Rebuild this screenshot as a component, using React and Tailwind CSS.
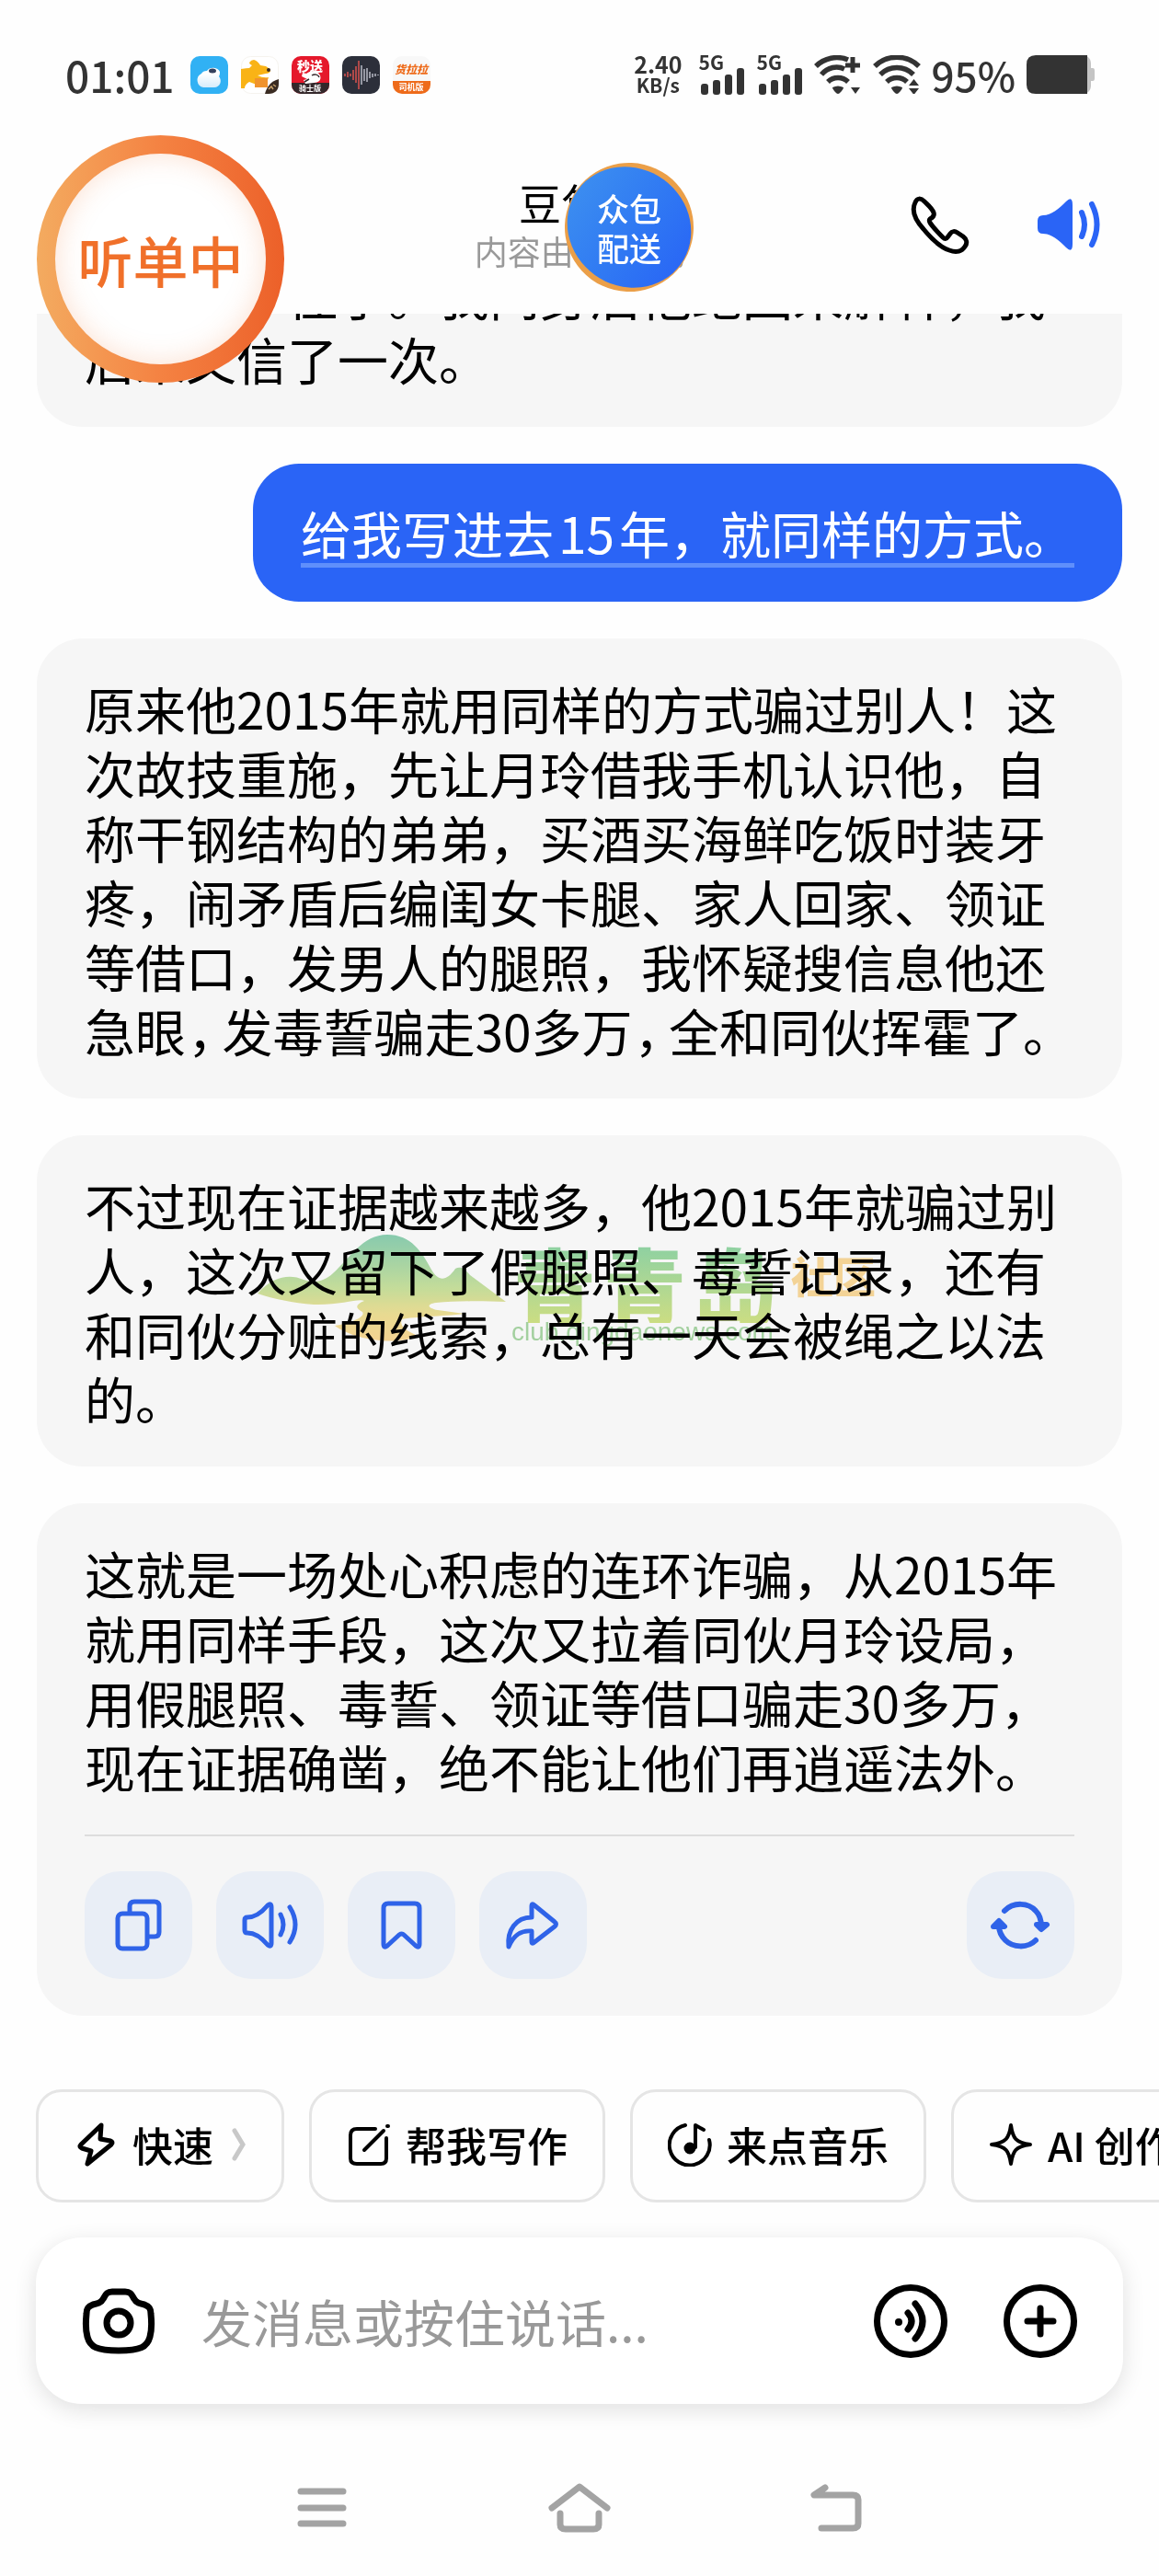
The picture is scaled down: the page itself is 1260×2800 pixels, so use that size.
import React from "react";
import { ChevronRight } from "lucide-react";

const INK = "#333333";

function WeatherApp() {
  return (
    <svg viewBox="0 0 41 41" className="size-[41px]" aria-hidden="true">
      <defs>
        <linearGradient id="cloud" x1="0" y1="0" x2="0" y2="1">
          <stop offset="0.3" stopColor="#fff" />
          <stop offset="1" stopColor="#d5ecfb" />
        </linearGradient>
      </defs>
      <rect width="41" height="41" rx="10" fill="#31b1f4" />
      <path d="M14 34a8 8 0 0 1-2-15c1-2 3-3 6-3a8 7 0 0 1 14 1c0 2 0 3-1 5 4 5 1 12-5 12z" fill="url(#cloud)" />
      <ellipse cx="24" cy="16" rx="4" ry="2.5" fill="#35405c" />
    </svg>
  );
}

function KangarooApp() {
  return (
    <svg viewBox="0 0 41 41" className="size-[41px]" aria-hidden="true">
      <rect x="0.5" y="0.5" width="40" height="40" rx="10" fill="#fff" stroke="#f5f3ee" />
      <path d="M0 14q6-1 9-1l3-3q-3-1-3-3 2-3 5-3 4 1 7 6l6 1q4 2 5 5-1 3-5 3l-9 2q6 3 12 2l-1 3-12 1v4l-8-3q-5 3-5 7H0z" fill="#f9b316" />
      <path d="M15 24h14v10H15z" fill="#f0932c" />
      <circle cx="30" cy="15" r="2" fill="#3a2b22" />
      <path d="M26 41c2-8 7-14 15-16v5c0 7-4 11-11 11z" fill="#3a2b22" />
      <path d="m30 36 3-3 2 3M35 31l3 2" stroke="#c9a26a" strokeWidth="1.5" fill="none" />
    </svg>
  );
}

function CourierApp() {
  return (
    <span className="relative flex size-[41px] flex-col items-center justify-between overflow-hidden rounded-[10px] bg-[#e5182b]">
      <span className="text-[14px] leading-[20px] font-black text-white">秒送</span>
      <span className="w-full bg-[#33272a] text-center text-[8px] leading-[12px] font-bold text-white">骑士版</span>
      <svg viewBox="0 0 41 41" className="absolute inset-0 size-full" aria-hidden="true">
        <path d="M16 19c5-4 13-3 15 2s-2 8-7 8l-9 1-2-4 4-1-6-3 1-4z" fill="#fff" />
        <path d="M22 21c3-2 7-1 8 2M14 28l5-3" stroke="#33272a" strokeWidth="1.5" fill="none" />
      </svg>
    </span>
  );
}

function RecorderApp() {
  return (
    <svg viewBox="0 0 41 41" className="size-[41px]" aria-hidden="true">
      <rect width="41" height="41" rx="10" fill="#2c2f3a" />
      <path d="M3 19v3M6 17v6M9 19v3M12 15v11M15 11v18M18 5v31" stroke="#d9534f" strokeWidth="1.5" />
      <path d="M21 10v21M24 14v13M27 13v15M30 17v7M33 19v4M36 19v3M39 20v1" stroke="#b9bcc6" strokeWidth="1.5" />
    </svg>
  );
}

function DriverApp() {
  return (
    <span className="flex size-[41px] flex-col items-center justify-between overflow-hidden rounded-[10px] bg-[#f8f8f8]">
      <span className="pt-1 text-[12px] leading-[20px] font-black text-[#ee6b1a] italic">货拉拉</span>
      <span className="w-full bg-[#ee6b1a] text-center text-[9px] leading-[14px] font-bold text-white">司机版</span>
    </span>
  );
}

function Signal() {
  return (
    <span className="flex flex-col">
      <span className="text-[21px] leading-[15px] font-bold">5G</span>
      <svg viewBox="0 0 50 28" className="h-[28px] w-[50px] overflow-visible" aria-hidden="true">
        <g fill={INK}>
          <rect x="2" y="16" width="8" height="12" rx="3" />
          <rect x="15" y="12" width="8" height="16" rx="3" />
          <rect x="28" y="6" width="8" height="22" rx="3" />
          <rect x="41" y="-1" width="8" height="29" rx="3" />
        </g>
      </svg>
    </span>
  );
}

function Wifi({ plus }) {
  return (
    <svg viewBox="0 0 52 42" className="h-[42px] w-[52px]" aria-hidden="true">
      <g fill="none" stroke={INK} strokeWidth="5.5">
        <path d={plus ? "M2 12C11 3 25 0 37 5" : "M2 12C15-1 37-1 50 12"} />
        <path d={plus ? "M8 21C15 13 25 11 33 15" : "M8 21C18 11 34 11 44 21"} />
        <path d="M15 29C21 23 31 23 37 29" />
      </g>
      <path d="M20 35c4-2 8-2 12 0 0 2-4 7-6 7s-6-5-6-7z" fill={INK} />
      {plus ? (
        <>
          <path d="M34 11h16M42 2v17" stroke={INK} strokeWidth="5" />
          <path d="M40 35h10l-5 7z" fill={INK} />
        </>
      ) : (
        <path d="M39 33h11l-5.500-7zM39 36h11l-5.500 7z" fill={INK} />
      )}
    </svg>
  );
}

function StatusBar() {
  return (
    <div className="flex h-[130px] items-center justify-between pt-[36px] pr-[70px] pb-[4px] pl-[71px] text-[#333333]">
      <div className="flex items-center gap-[17px]">
        <span className="text-[46px] leading-[50px] font-medium">01:01</span>
        <div className="flex gap-[14px]">
          <WeatherApp />
          <KangarooApp />
          <CourierApp />
          <RecorderApp />
          <DriverApp />
        </div>
      </div>
      <div className="flex items-center">
        <div className="mr-[18px] flex flex-col items-center font-bold">
          <span className="text-[25px] leading-[23px]">2.40</span>
          <span className="text-[21px] leading-[23px]">KB/s</span>
        </div>
        <div className="mr-[12px] flex gap-[13px]">
          <Signal />
          <Signal />
        </div>
        <div className="mr-[12px] flex gap-[12px]">
          <Wifi plus />
          <Wifi />
        </div>
        <span className="mr-[12px] text-[44px] leading-[50px] font-medium">95%</span>
        <svg viewBox="0 0 74 42" className="h-[42px] w-[74px]" aria-label="电量 95%">
          <path d="M60 0c7 0 10 4 10 9v5h2q2 0 2 3v8q0 3-2 3h-2v5c0 5-3 9-10 9z" fill="#c4c4c4" />
          <path d="M10 0h56v42H10Q0 42 0 32V10Q0 0 10 0z" fill={INK} />
        </svg>
      </div>
    </div>
  );
}

function Header() {
  return (
    <div className="grid h-[211px] grid-cols-[1fr_auto_1fr]">
      <div className="col-start-2 flex flex-col items-center pt-[60px]">
        <h1 className="flex items-center text-[46px] leading-[58px] text-black">
          豆包
          <ChevronRight className="size-[40px]" aria-hidden="true" />
        </h1>
        <p className="text-[36px] leading-[48px] text-[#999999]">内容由 AI 生成</p>
      </div>
      <div className="flex items-start justify-end pt-[78px] pr-[60px]">
        <button type="button" aria-label="通话" className="mr-[65px]">
          <svg viewBox="0 0 74 72" className="h-[72px] w-[74px]" fill="none" stroke="#000" strokeWidth="5" strokeLinejoin="round">
            <path d="M18 11C14 7 10 7 8 12 4 20 7 30 17 41c9 11 19 20 28 23 8 3 14 1 17-4 3-4 2-8-2-11l-6-4c-3-2-6-2-8 1l-3 4c-1 2-3 2-5 0C33 45 28 40 24 34c-1-2-1-3 0-4 4-2 5-4 4-7-2-5-6-8-10-12z" />
          </svg>
        </button>
        <button type="button" aria-label="声音">
          <svg viewBox="0 0 74 72" className="h-[72px] w-[74px]">
            <path d="M2 32q0-6 6-6c9 0 17-7 25-15q7-7 7 4v42q0 11-7 4c-8-8-16-15-25-15q-6 0-6-6z" fill="#2a64f6" />
            <path d="M50 23q6 13 0 26M61 14q11 22 0 44" fill="none" stroke="#2a64f6" strokeWidth="6" strokeLinecap="round" />
          </svg>
        </button>
      </div>
    </div>
  );
}

function FloatingBadges() {
  return (
    <>
      <div className="absolute top-[147px] left-[40px] z-10 flex size-[269px] rounded-full bg-gradient-to-r from-[#f3ab60] via-[#f48242] to-[#ec6029] p-[20px]">
        <span className="flex size-full items-center justify-center rounded-full bg-white text-[60px] leading-[60px] font-medium text-[#f0702a] shadow-[inset_0_0_30px_rgba(244,130,66,0.25)]">听单中</span>
      </div>
      <div className="absolute top-[177px] left-[614px] z-10 flex size-[140px] rotate-[36deg] items-center justify-center rounded-full bg-[#eb9f48] px-px py-[6px]">
        <span className="flex size-full items-center justify-center rounded-[50%] bg-gradient-to-r from-[#3b8cf0] to-[#2a68f5]">
          <span className="-rotate-[36deg] text-[35px] leading-[43px] font-medium text-white">众包<br />配送</span>
        </span>
      </div>
    </>
  );
}

function Bubble({ children }) {
  return (
    <article className="rounded-[50px] bg-[#f6f6f6] px-[52px] py-[40px] text-[55px] leading-[70px] text-black">
      {children}
    </article>
  );
}

function HalfComma() {
  return <span className="pl-[2px] pr-[10px] [font-feature-settings:'halt']">，</span>;
}

function ActionButton({ label, children }) {
  return (
    <button type="button" aria-label={label} className="size-[117px] rounded-[38px] bg-[#e9eef6]">
      <svg viewBox="0 0 117 117" className="size-full" fill="none" stroke="#2f63e8" strokeWidth="5" strokeLinecap="round" strokeLinejoin="round">
        {children}
      </svg>
    </button>
  );
}

function Actions() {
  return (
    <div className="flex justify-between">
      <div className="flex gap-[26px]">
        <ActionButton label="复制">
          <rect x="36" y="46" width="32" height="38" rx="5" />
          <path d="M49 45v-7q0-5 5-5h22q5 0 5 5v28q0 5-5 5h-7" />
        </ActionButton>
        <ActionButton label="朗读">
          <path d="M31 53q0-3 3-3c9 0 17-7 22-13q4-3 4 2v39q0 5-4 2c-5-6-13-13-22-13q-3 0-3-3z" />
          <path d="M70 47q6 11 0 22M80 39q12 19 0 38" />
        </ActionButton>
        <ActionButton label="收藏">
          <path d="M39 40q0-5 5-5h29q5 0 5 5v39q0 5-4 2L61 69q-2-2-5 0L43 81q-4 3-4-2z" />
        </ActionButton>
        <ActionButton label="分享">
          <path d="M57 38q0-4 3-1l22 18q3 2 0 5L60 77q-3 3-3-1V65c-11-1-19 3-25 17-2-18 8-32 25-32z" />
        </ActionButton>
      </div>
      <ActionButton label="重新生成">
        <g strokeWidth="6">
          <path d="M41 43c10-10 26-9 34 0 5 5 6 10 6 17M76 58l5 5 6-5z" />
          <path d="M75 75c-9 9-25 8-33 0-5-5-7-10-7-16M29 60l6-6 6 6z" />
        </g>
      </ActionButton>
    </div>
  );
}

function Watermark() {
  return (
    <div className="pointer-events-none absolute top-[108px] left-[240px] flex mix-blend-multiply" aria-hidden="true">
      <svg viewBox="0 0 270 118" className="h-[118px] w-[270px] opacity-70">
        <defs>
          <linearGradient id="hill" x1="0" y1="0" x2="0" y2="1">
            <stop offset="0" stopColor="#5bbf95" />
            <stop offset="0.5" stopColor="#b5d978" />
            <stop offset="0.75" stopColor="#ecd66a" />
            <stop offset="1" stopColor="#fbcb6a" />
          </linearGradient>
        </defs>
        <path d="M0 64c18-20 36-21 50-15 12 4 22 2 32-7C100 26 114 0 141 0c26 0 38 19 48 38 8 14 17 12 26-1 6-3 10 0 16 7l39 29c-28-1-54-1-76 1-12 2-8 6 2 8l29 4c-25 3-55 3-68 6-3 6 2 12 18 18-28 12-72 3-91-11 18-3 34-10 30-15-8-4-8-8 2-12-6-3-27 5-55 4C38 74 18 70 0 64z" fill="url(#hill)" />
      </svg>
      <div className="flex flex-col pt-[8px]">
        <div className="flex items-start gap-[16px]">
          <span className="flex gap-[8px] bg-gradient-to-b from-[#8fd8a9] to-[#d3e587] bg-clip-text pl-[8px] text-[90px] leading-[88px] font-black text-transparent">
            <span>青</span>
            <span>青</span>
            <span>岛</span>
          </span>
          <span className="text-[46px] leading-[70px] font-black text-[#fcdb9c]">社区</span>
        </div>
        <span className="pl-[6px] font-['Liberation_Sans'] text-[28px] leading-[20px] text-[#a9d8a5]">club.qingdaonews.com</span>
      </div>
    </div>
  );
}

function Chip({ label, icon, children }) {
  return (
    <button type="button" className="flex h-[123px] shrink-0 items-center rounded-[28px] border-[3px] border-[#e5e5e5] px-[38px] pb-[4px] text-[44px] leading-[60px] font-medium whitespace-nowrap text-black">
      <svg viewBox="0 0 48 48" className="mr-[16px] size-[48px]" fill="none" stroke="#000" strokeWidth="5" strokeLinecap="round" strokeLinejoin="round" aria-hidden="true">
        {icon}
      </svg>
      {label}
      {children}
    </button>
  );
}

function Composer() {
  return (
    <form className="mx-[39px] mt-[38px] flex h-[181px] items-center rounded-[50px] bg-white px-[50px] shadow-[0_6px_24px_rgba(0,0,0,0.12)]" onSubmit={(e) => e.preventDefault()}>
      <button type="button" aria-label="拍照">
        <svg viewBox="0 0 80 80" className="size-[80px]" fill="none" stroke="#000" strokeWidth="7" strokeLinejoin="round">
          <path d="M33 8h14c6 0 7 3 10 8 2 4 6 5 11 6 5 2 7 4 7 10 1 10 1 18-1 25-3 11-10 15-34 15S9 68 6 57C4 50 4 42 5 32c0-6 2-8 7-10 5-1 9-2 11-6 3-5 4-8 10-8z" />
          <circle cx="40" cy="42" r="13" />
        </svg>
      </button>
      <input type="text" aria-label="消息" placeholder="发消息或按住说话..." className="ml-[50px] h-[80px] min-w-0 flex-1 text-[55px] text-black outline-none placeholder:text-[#999999]" />
      <button type="button" aria-label="语音">
        <svg viewBox="0 0 80 80" className="size-[80px]" fill="none" stroke="#000" strokeWidth="7" strokeLinecap="round">
          <circle cx="40" cy="40" r="36.500" />
          <circle cx="27" cy="41" r="4" fill="#000" stroke="none" />
          <path d="M37 31q8 9 0 18M45 21q16 19 0 38" />
        </svg>
      </button>
      <button type="button" aria-label="更多" className="ml-[61px]">
        <svg viewBox="0 0 80 80" className="size-[80px]" fill="none" stroke="#000" strokeWidth="7" strokeLinecap="round">
          <circle cx="40" cy="40" r="36.500" />
          <path d="M26 40h28M40 26v28" />
        </svg>
      </button>
    </form>
  );
}

function NavBar() {
  return (
    <nav className="flex items-center justify-center gap-[208px] pt-[76px] pb-[40px]">
      <button type="button" aria-label="最近任务">
        <svg viewBox="0 0 72 72" className="size-[72px]" stroke="#a3a3a3" strokeWidth="7" strokeLinecap="round">
          <path d="M13 19h46M13 37h46M13 54h46" />
        </svg>
      </button>
      <button type="button" aria-label="主屏幕">
        <svg viewBox="0 0 72 72" className="size-[72px]" fill="none" stroke="#a3a3a3" strokeWidth="7" strokeLinecap="round" strokeLinejoin="round">
          <path d="m6 37 30-23 30 23" />
          <path d="M15 43v12q0 5 6 5h30q6 0 6-5V43" />
        </svg>
      </button>
      <button type="button" aria-label="返回">
        <svg viewBox="0 0 72 72" className="size-[72px]" fill="none" stroke="#a3a3a3" strokeWidth="7" strokeLinecap="round" strokeLinejoin="round">
          <path d="M23 15 11 23h42q6 0 6 5v26q0 5-6 5H19" />
        </svg>
      </button>
    </nav>
  );
}

export default function App() {
  return (
    <div className="relative overflow-hidden bg-[#fefefe] font-['Noto_Sans_CJK_SC','Noto_Sans',sans-serif]" lang="zh-CN">
      <StatusBar />
      <Header />
      <FloatingBadges />

      <main className="flex flex-col gap-[40px] px-[40px]">
        <div className="-mt-[97px] [clip-path:inset(97px_0_0_0)]">
          <Bubble>
            <p>最后他不住了。我问身后他绝回来解释，我</p>
            <p>后来又信了一次。</p>
          </Bubble>
        </div>

        <div className="self-end rounded-[50px] bg-[#2a64f6] px-[52px] pt-[40px] pb-[37px] text-[55px] leading-[68px] text-white">
          <p className="border-b-[5px] border-[#5f8ffb]">
            给我写进去<span className="px-[5px]">15</span>年，就同样的方式。
          </p>
        </div>

        <Bubble>
          <p>原来他2015年就用同样的方式骗过别人！这</p>
          <p>次故技重施，先让月玲借我手机认识他，自</p>
          <p>称干钢结构的弟弟，买酒买海鲜吃饭时装牙</p>
          <p>疼，闹矛盾后编闺女卡腿、家人回家、领证</p>
          <p>等借口，发男人的腿照，我怀疑搜信息他还</p>
          <p>急眼<HalfComma />发毒誓骗走30多万<HalfComma />全和同伙挥霍了。</p>
        </Bubble>

        <div className="relative">
          <Bubble>
            <p>不过现在证据越来越多，他2015年就骗过别</p>
            <p>人，这次又留下了假腿照、毒誓记录，还有</p>
            <p>和同伙分赃的线索，总有一天会被绳之以法</p>
            <p>的。</p>
          </Bubble>
          <Watermark />
        </div>

        <Bubble>
          <p>这就是一场处心积虑的连环诈骗，从2015年</p>
          <p>就用同样手段，这次又拉着同伙月玲设局，</p>
          <p>用假腿照、毒誓、领证等借口骗走30多万，</p>
          <p>现在证据确凿，绝不能让他们再逍遥法外。</p>
          <hr className="mt-[40px] mb-[38px] border-t-2 border-[#dddddd]" />
          <Actions />
        </Bubble>
      </main>

      <div className="mt-[80px] flex gap-[27px] overflow-hidden pl-[39px]">
        <Chip label="快速" icon={<path d="M30 3 8 24c-2 2-1 3 1 4l10 3-4 14L41 24c2-2 1-3-1-4l-11-2z" />}>
          <svg viewBox="0 0 16 36" className="ml-[20px] h-[36px] w-[16px]" fill="none" stroke="#c8c8c8" strokeWidth="5" strokeLinecap="round" aria-hidden="true">
            <path d="m3 3 9 15-9 15" />
          </svg>
        </Chip>
        <Chip
          label="帮我写作"
          icon={
            <>
              <path strokeWidth="4" d="M31 7H11q-7 0-7 7v25q0 6 7 6h26q6 0 6-6V17" />
              <path strokeWidth="4" d="m19 30 21-21M44 4l1 0" />
            </>
          }
        />
        <Chip
          label="来点音乐"
          icon={
            <>
              <path strokeWidth="4" d="M19 3a22 22 0 1 0 26 16" />
              <circle cx="24" cy="28" r="5" fill="#000" strokeWidth="3" />
              <path strokeWidth="4" d="M30 27V3l9 5" />
            </>
          }
        />
        <Chip
          label="AI 创作"
          icon={<path strokeWidth="4" d="M24 3c2 14 5 19 21 21-16 2-19 7-21 21-2-14-5-19-21-21C19 22 22 17 24 3z" />}
        />
      </div>

      <Composer />
      <NavBar />
    </div>
  );
}
